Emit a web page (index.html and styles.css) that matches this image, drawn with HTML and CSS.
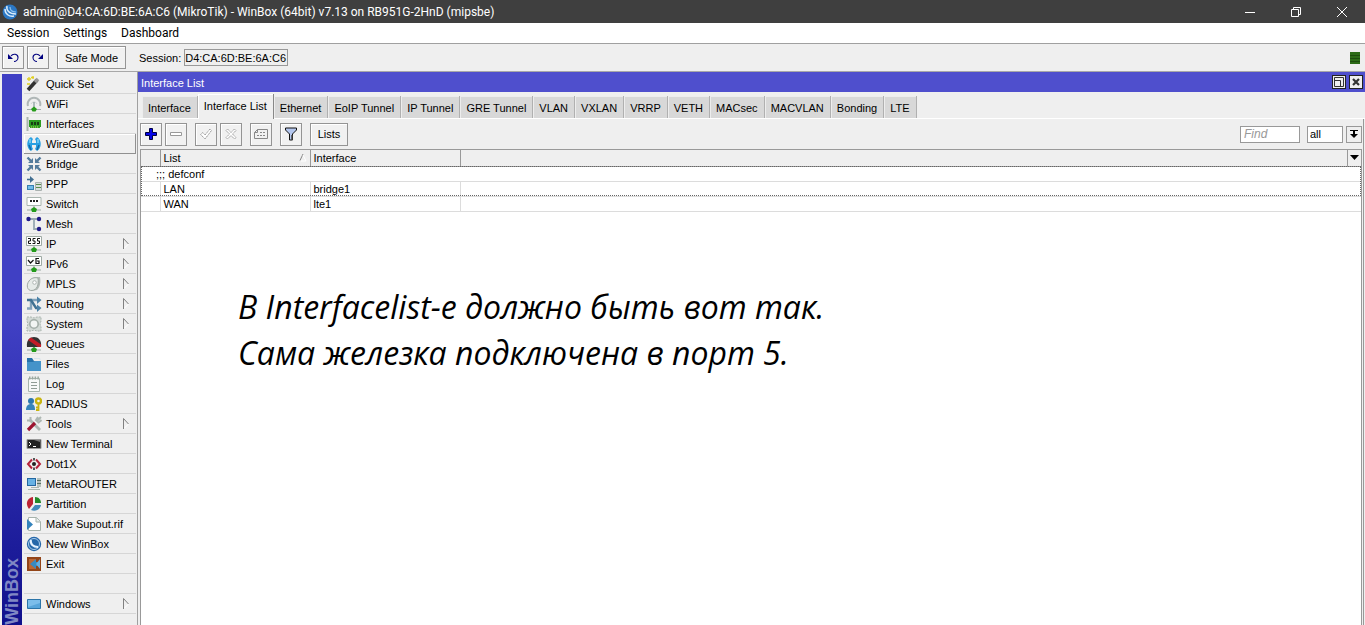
FILE: index.html
```html
<!DOCTYPE html>
<html lang="en">
<head>
<meta charset="utf-8">
<title>WinBox</title>
<link rel="stylesheet" href="styles.css">
</head>
<body>
<div class="app">
  <header class="titlebar">
    <svg class="icon" viewBox="0 0 16 16"><circle cx="8" cy="8" r="7.4" fill="#2b78c5"/><path d="M5 2c-1 4 2 8 9 8M3 5c0 5 4 8 9 7" fill="none" stroke="#d9ecfb" stroke-width="1.5"/><path d="M8 3c0 3 2 5 6 5" fill="none" stroke="#8fc3ee" stroke-width="1.2"/></svg>
    <h1 class="title">admin@D4:CA:6D:BE:6A:C6 (MikroTik) - WinBox (64bit) v7.13 on RB951G-2HnD (mipsbe)</h1>
    <button class="sys" aria-label="Minimize"><svg viewBox="0 0 10 10"><path d="M0 5.500h10" stroke="#fff"/></svg></button>
    <button class="sys" aria-label="Restore"><svg viewBox="0 0 10 10"><path d="M.5 2.500h7v7h-7zM2.500 2.500v-2h7v7h-2" fill="none" stroke="#fff"/></svg></button>
    <button class="sys" aria-label="Close"><svg viewBox="0 0 10 10"><path d="M0 0l10 10M10 0L0 10" stroke="#fff"/></svg></button>
  </header>

  <nav class="menubar">
    <button>Session</button><button>Settings</button><button>Dashboard</button>
  </nav>

  <div class="toolbar">
    <button class="btn" aria-label="Undo"><svg viewBox="0 0 12 12"><path d="M4 4c2-3 7-2 7 1.500C11 8 9 9.500 7 9.500" fill="none" stroke="#00007f" stroke-width="1.100"/><path d="M1 2l5 5H1z" fill="#00007f"/></svg></button>
    <button class="btn" aria-label="Redo"><svg viewBox="0 0 12 12"><path d="M8 4C6 1 1 2 1 5.500 1 8 3 9.500 5 9.500" fill="none" stroke="#00007f" stroke-width="1.100"/><path d="M11 2v5H6z" fill="#00007f"/></svg></button>
    <button class="btn safe">Safe Mode</button>
    <label class="session" for="session">Session:</label>
    <input id="session" class="session-box" value="D4:CA:6D:BE:6A:C6" readonly>
    <svg class="meter" viewBox="0 0 10 12"><path d="M0 0h10v12H0z" fill="#2c6b17"/><path d="M0 3.500h10M0 6.500h10M0 9.500h10" stroke="#1d4d0d"/></svg>
  </div>

  <main class="main">
    <div class="strip"><span>WinBox</span></div>
    <nav class="side">
      <button class="item"><svg class="icon" viewBox="0 0 16 16"><path d="M2 14L11 4" stroke="#333" stroke-width="3.600"/><path d="M9 6l3-3" stroke="#999" stroke-width="3.600"/><path d="M3 1v4M1 3h4M7 0v3M1 8h3M8 1.500H5" stroke="#e0cf20" stroke-width="1.300"/></svg>Quick Set</button>
      <button class="item"><svg class="icon" viewBox="0 0 16 16"><path d="M2 10A6.300 6.300 0 1 1 14 10" fill="none" stroke="#b0b7b7" stroke-width="2"/><path d="M5 8a3.200 3.200 0 0 1 6 0" fill="none" stroke="#d0d5d5"/><path d="M8 6v6" stroke="#9aa" stroke-width="1.500"/><path d="M1 13.500h14" stroke="#a4adad"/><path d="M5 13l3-2.500 3 2.500-1.500 2.500h-3z" fill="#289c1b"/></svg>WiFi</button>
      <button class="item"><svg class="icon" viewBox="0 0 16 16"><path d="M1.500 1v14" stroke="#a9b4ae" stroke-width="2"/><path d="M3 4h12v7h-1v1H4v-1H3z" fill="#2c9b20"/><path d="M5 6h2v3H5zM8 6h2v3H8zM11 6h2v3h-2z" fill="#173e12"/><path d="M5 11h8" stroke="#bedc5a" stroke-dasharray="1 1"/></svg>Interfaces</button>
      <button class="item raised"><svg class="icon" viewBox="0 0 16 16"><path d="M5 1C0 4 0 12 5 15l2-2-1-2V9h4v2l-1 2 2 2c5-3 5-11 0-14L9 3l1 2v2H6V5l1-2z" fill="#2aa0e2"/><path d="M4 3v4M12 3v4" stroke="#80d2f6" stroke-width="1.500"/><path d="M3 9l2 5M13 9l-2 5" stroke="#1368a5" stroke-width="1.500"/></svg>WireGuard</button>
      <button class="item"><svg class="icon" viewBox="0 0 16 16"><path d="M1.500 1.500L5 5M14.500 1.500L11 5M1.500 14.500L5 11M14.500 14.500L11 11" stroke="#537b9c" stroke-width="2.400"/><path d="M7 2v5H2zM9 2v5h5zM7 14V9H2zM9 14V9h5z" fill="#537b9c"/></svg>Bridge</button>
      <button class="item"><svg class="icon" viewBox="0 0 16 16"><path d="M1 3.500h5" stroke="#416e91" stroke-width="1.600"/><path d="M4 0l4 3.500L4 7z" fill="#416e91"/><path d="M1 9h7v5H1z" fill="#377eae"/><path d="M2 10h5v3H2z" fill="#72bce9"/><path d="M9.500 6.500h6v8h-6z" fill="#d9dfdd" stroke="#a9b1af"/><path d="M10 8.500h5M10 11.500h5" stroke="#5a8c4d"/></svg>PPP</button>
      <button class="item"><svg class="icon" viewBox="0 0 16 16"><path d="M1 1.500h14v8H1z" fill="#fff" stroke="#a8b4ae"/><path d="M4 4h2v2H4zM7 4h2v2H7zM10 4h2v2h-2z" fill="#222"/><path d="M8 10v3M1 14h14" stroke="#9baaa3"/><path d="M5 13l3-2 3 2-1 3H6z" fill="#259b1d"/></svg>Switch</button>
      <button class="item"><svg class="icon" viewBox="0 0 16 16"><path d="M3 3h10M8 3v10h5" fill="none" stroke="#98a8b2" stroke-width="1.800"/><g fill="#201a89"><circle cx="2.500" cy="3" r="2.200"/><circle cx="13" cy="3" r="2.200"/><circle cx="13" cy="13" r="2.200"/></g></svg>Mesh</button>
      <button class="item sub"><svg class="icon" viewBox="0 0 16 16"><path d="M.5 .5h15v9H.5z" fill="#fff" stroke="#9eaaa4"/><path d="M2 2.500h2.500v2.500H2.500v2.500H5M9.500 2.500H7V5h2v2.500H6.500M14 2.500h-2.500V5h2v2.500H11" fill="none" stroke="#111"/><path d="M8 10v3M1 14h14" stroke="#9baaa3"/><path d="M5 13l3-2 3 2-1 3H6z" fill="#259b1d"/></svg>IP</button>
      <button class="item sub"><svg class="icon" viewBox="0 0 16 16"><path d="M.5 .5h15v9H.5z" fill="#fff" stroke="#9eaaa4"/><path d="M2 4l2.500 3L7.500 4M13 2.500h-3v5h3V5h-2" fill="none" stroke="#111" stroke-width="1.200"/><path d="M8 10v3M1 14h14" stroke="#9baaa3"/><path d="M5 13l3-2 3 2-1 3H6z" fill="#259b1d"/></svg>IPv6</button>
      <button class="item sub"><svg class="icon" viewBox="0 0 16 16"><path d="M5 3C8 1 11 1 14 1c1 5 0 10-3 13l-6 1z" fill="#b3bbb7"/><path d="M12 2c1 7-1 12-6 12.500S0 9 3 5s7-3.500 9-3z" fill="#e6ebe8" stroke="#9fa8a3"/><circle cx="8.500" cy="6.500" r="1.800" fill="#fff" stroke="#aeb6b2"/></svg>MPLS</button>
      <button class="item sub"><svg class="icon" viewBox="0 0 16 16"><path d="M1 12.500h4V4h7" fill="none" stroke="#83a3bb" stroke-width="2.400"/><path d="M1 4h4l5 8h2" fill="none" stroke="#3f7192" stroke-width="2.400"/><path d="M11 .5L15.500 4 11 8zM11 8.500l4.500 3.500-4.500 4z" fill="#4c82a7"/></svg>Routing</button>
      <button class="item sub"><svg class="icon" viewBox="0 0 16 16"><path d="M1 1h4l3 1 3-1h4v4l-1 3 1 3v4h-4l-3-1-3 1H1v-4l1-3-1-3z" fill="#d3dad6" stroke="#aab5af" stroke-dasharray="2 1"/><circle cx="8" cy="8" r="4.200" fill="#f2f5f3" stroke="#a3aea8" stroke-width="1.600"/></svg>System</button>
      <button class="item"><svg class="icon" viewBox="0 0 16 16"><path d="M1 11C0 4 4 1 8 1s8 3 7 10z" fill="#333"/><path d="M2 4l3-2.500 10 7V11h-3z" fill="#c21d28"/><path d="M8 11v2M1 14h14" stroke="#9baaa3"/><path d="M5 13l3-2 3 2-1 3H6z" fill="#259b1d"/></svg>Queues</button>
      <button class="item"><svg class="icon" viewBox="0 0 16 16"><path d="M1 2h5l2 3h7v10H1z" fill="#2672aa"/><path d="M1 6h6l2-1h6v10H1z" fill="#4493c9"/><path d="M8 2.500h6v2" fill="none" stroke="#d6e4ec"/></svg>Files</button>
      <button class="item"><svg class="icon" viewBox="0 0 16 16"><path d="M2.500 2.500h11v13h-11z" fill="#f7f9f8" stroke="#a7b5ad"/><path d="M3 2h10" stroke="#9aa8a0" stroke-width="3" stroke-dasharray="1.500 1.300"/><path d="M5 6.500h6M5 9.500h6M5 12.500h6" stroke="#8f9c95"/></svg>Log</button>
      <button class="item"><svg class="icon" viewBox="0 0 16 16"><circle cx="5" cy="5" r="3" fill="#2a77af"/><path d="M0 14c0-4 2-6 5-6s4 2 4 6z" fill="#3684bb"/><circle cx="12.500" cy="5" r="2.500" fill="none" stroke="#c7b412" stroke-width="2.400"/><path d="M12.500 8v7M12 11.500h-2M12 14h-2" stroke="#c7b412" stroke-width="1.800"/></svg>RADIUS</button>
      <button class="item sub"><svg class="icon" viewBox="0 0 16 16"><path d="M4 4l10 10" stroke="#adb7b2" stroke-width="2.800"/><path d="M1 4.500h3.500V1M11 5l4-4M15.500 4l-3 2.500L10 4 12 1" fill="none" stroke="#adb7b2" stroke-width="2"/><path d="M2 14l7-7" stroke="#9d1430" stroke-width="3.200"/></svg>Tools</button>
      <button class="item"><svg class="icon" viewBox="0 0 16 16"><path d="M1 3.500h14v9H1z" fill="#222" stroke="#999"/><path d="M8 4h6v2z" fill="#777"/><path d="M3 6l2 2-2 2M7 10.500h3" fill="none" stroke="#fff"/></svg>New Terminal</button>
      <button class="item"><svg class="icon" viewBox="0 0 16 16"><path d="M6 3.500L2 8l4 4.500M10 3.500L14 8l-4 4.500" fill="none" stroke="#b4233b" stroke-width="2"/><circle cx="8" cy="8" r="2" fill="#222"/><path d="M8 2v2.500M8 11.500V14" stroke="#555" stroke-width="2"/></svg>Dot1X</button>
      <button class="item"><svg class="icon" viewBox="0 0 16 16"><path d="M1 2h9v8H1z" fill="#2467a0"/><path d="M2 3h7v6H2z" fill="#67b2e4"/><path d="M11 2h4v9h-4z" fill="#b6c1bc"/><path d="M11 4.500h4M11 7.500h4" stroke="#577064"/><path d="M2 13.500h12M5 11.500h8" stroke="#aab7b0"/></svg>MetaROUTER</button>
      <button class="item"><svg class="icon" viewBox="0 0 16 16"><path d="M7 1v7l-4 5C-1 8 1 2 7 1z" fill="#bd2335"/><path d="M9 1c4 0 6 3 6 6H9z" fill="#228a2a"/><path d="M5 14l4-5h6c-1 5-6 7-10 5z" fill="#418abc"/></svg>Partition</button>
      <button class="item"><svg class="icon" viewBox="0 0 16 16"><path d="M2.500 1.500h8l4 4v9h-12z" fill="#fff" stroke="#a6b2ab"/><path d="M10 1.500V6h4.500" fill="#e6ecea" stroke="#a6b2ab"/><path d="M1 3l6 5.500L1 14z" fill="#3483bc"/></svg>Make Supout.rif</button>
      <button class="item"><svg class="icon" viewBox="0 0 16 16"><circle cx="8" cy="8" r="7.200" fill="#2567a9"/><circle cx="8" cy="8" r="5.500" fill="none" stroke="#a9cceb"/><path d="M5 4c-1 4 2 7 7 7" fill="none" stroke="#e7f3ff" stroke-width="2"/></svg>New WinBox</button>
      <button class="item"><svg class="icon" viewBox="0 0 16 16"><path d="M1 1h14v14H1z" fill="#934519"/><path d="M3 3h7v10H3z" fill="#bd6733"/><path d="M4 8l6-5v3h2v4h-2v3z" fill="#388ac0"/><path d="M10 8l4-5v10z" fill="#65afe0"/></svg>Exit</button>
      <div class="item"></div>
      <button class="item sub"><svg class="icon" viewBox="0 0 16 16"><path d="M1.500 3.500h13v9h-13z" fill="#57a5da" stroke="#2b74a8"/><path d="M2 4h12v3L2 11z" fill="#7bbdea"/></svg>Windows</button>
    </nav>

    <section class="window">
      <header class="wtitle">
        <h2>Interface List</h2>
        <button class="wbtn" aria-label="Restore window"><svg viewBox="0 0 10 10"><path d="M.5 .5h9v9h-9zM1 3.500h5.500v6" fill="none" stroke="#333"/></svg></button>
        <button class="wbtn" aria-label="Close window"><svg viewBox="0 0 10 10"><path d="M2 2l6 6M8 2L2 8" stroke="#333" stroke-width="2.200"/></svg></button>
      </header>
      <div class="tabs">
        <button class="tab">Interface</button><button class="tab active">Interface List</button><button class="tab">Ethernet</button><button class="tab">EoIP Tunnel</button><button class="tab">IP Tunnel</button><button class="tab">GRE Tunnel</button><button class="tab">VLAN</button><button class="tab">VXLAN</button><button class="tab">VRRP</button><button class="tab">VETH</button><button class="tab">MACsec</button><button class="tab">MACVLAN</button><button class="tab">Bonding</button><button class="tab">LTE</button>
      </div>
      <div class="pane">
        <div class="tools">
          <button class="btn" aria-label="Add"><svg viewBox="0 0 12 12"><path d="M4.500 .5h3v4h4v3h-4v4h-3v-4h-4v-3h4z" fill="#0505e8" stroke="#000040"/></svg></button>
          <button class="btn" aria-label="Remove"><svg viewBox="0 0 12 12"><path d="M.5 4.500h11v3H.5z" fill="#fff" stroke="#999"/></svg></button>
          <button class="btn gap" aria-label="Enable"><svg viewBox="0 0 12 12"><path d="M.7 6.500l2-2L5 7l5-6 1.500 1.500L5 11z" fill="#fff" stroke="#999" stroke-dasharray="1.500 .6"/></svg></button>
          <button class="btn" aria-label="Disable"><svg viewBox="0 0 12 12"><path d="M1 2.500L2.500 1 6 4.500 9.500 1 11 2.500 7.500 6 11 9.500 9.500 11 6 7.500 2.500 11 1 9.500 4.500 6z" fill="#fff" stroke="#999" stroke-dasharray="1.500 .6"/></svg></button>
          <button class="btn gap" aria-label="Comment"><svg class="wide" viewBox="0 0 14 12"><path d="M3.500 1.500h10v9H.5v-6zM3.500 1.500v3h-3" fill="none" stroke="#888"/><path d="M6 4.500h6M3 7.500h8" stroke="#888" stroke-dasharray="2 1"/></svg></button>
          <button class="btn gap" aria-label="Filter"><svg viewBox="0 0 12 14" class="funnel"><path d="M.5 1h11v2l-4 4v6h-3V7l-4-4z" fill="#b4c7ef" stroke="#111"/><path d="M7 8v5" stroke="#444" stroke-width="1.500"/></svg></button>
          <button class="btn gap lists">Lists</button>
          <input class="find" placeholder="Find" aria-label="Find">
          <select class="scope" aria-label="List filter"><option>all</option></select>
          <button class="drop" aria-label="More filters"><svg viewBox="0 0 8 8"><path d="M0 .5h8" stroke="#000"/><path d="M3 1h2v3h3L4 8 0 4h3z"/></svg></button>
        </div>
        <div class="grid">
          <table>
            <colgroup><col class="c-flag"><col class="c-col"><col class="c-col"><col><col class="c-menu"></colgroup>
            <thead>
              <tr><th></th><th><div class="sort">List<svg viewBox="0 0 8 8"><path d="M1 6.500L4 0" stroke="#888"/><path d="M4 1l3 6H2" fill="none" stroke="#fff"/></svg></div></th><th>Interface</th><th></th><th class="menu"><button aria-label="Columns"><svg viewBox="0 0 9 5"><path d="M0 0h9L4.500 5z"/></svg></button></th></tr>
            </thead>
            <tbody class="selected">
              <tr class="comment"><td colspan="5">;;; defconf</td></tr>
              <tr><td></td><td>LAN</td><td>bridge1</td><td colspan="2"></td></tr>
            </tbody>
            <tbody>
              <tr><td></td><td>WAN</td><td>lte1</td><td colspan="2"></td></tr>
            </tbody>
          </table>
          <p class="note">В Interfacelist-е должно быть вот так.<br>Сама железка подключена в порт 5.</p>
        </div>
      </div>
    </section>
  </main>
</div>
</body>
</html>
```

FILE: styles.css
```css
* { box-sizing: border-box; }
html, body { height: 100%; margin: 0; }
body { font: 11px/14px "Liberation Sans", Arial, sans-serif; color: #000; background: #efefef; overflow: hidden; }
button, input, select { font: inherit; color: inherit; margin: 0; padding: 0; border: 0; border-radius: 0; background: none; }
button { display: flex; align-items: center; justify-content: center; white-space: nowrap; }
h1, h2, p { margin: 0; font-weight: normal; }
svg { display: block; flex: none; }
.app { display: flex; flex-direction: column; height: 100vh; }
.icon { width: 16px; height: 16px; }

.titlebar { display: flex; align-items: center; height: 23px; flex: none; padding-left: 2px; background: #3f3f3f; color: #fff; }
.title { flex: 1; padding-left: 5px; font: 12px/22px Roboto, "Open Sans", sans-serif; white-space: nowrap; }
.sys { width: 46px; height: 22px; }
.sys svg { width: 10px; height: 10px; }

.menubar { display: flex; gap: 14px; height: 21px; flex: none; padding: 0 7px; background: #fff; border-bottom: 1px solid #a0a0a0; font: 12px/20px Roboto, "Open Sans", sans-serif; }

.toolbar { display: flex; align-items: center; height: 28px; flex: none; padding: 0 5px 0 2px; gap: 3px; border-bottom: 1px solid #a8a8a8; }
.btn { width: 22px; height: 23px; border: 1px solid #949494; background: #f1f1f1; box-shadow: inset 1px 1px #fff; }
.btn svg { width: 12px; height: 12px; }
.btn .wide { width: 14px; }
.btn .funnel { height: 14px; }
.toolbar .safe { width: 69px; margin-left: 5px; }
.session { margin-left: 10px; }
.session-box { width: 104px; height: 17px; border: 1px solid #999; }
.meter { width: 10px; height: 12px; margin-left: auto; }

.main { display: flex; flex: 1; min-height: 0; }
.strip { display: flex; align-items: flex-end; justify-content: center; width: 20px; margin: 2px 0 0 2px; background: linear-gradient(#4040c4 45%, #10108c); overflow: hidden; }
.strip span { writing-mode: vertical-rl; transform: rotate(180deg); font: bold 18px/20px "Liberation Sans", Arial, sans-serif; color: #8088c4; }
.side { width: 114px; padding: 2px 0 0 2px; overflow: hidden; }
.item { display: flex; justify-content: flex-start; align-items: center; gap: 4px; width: 100%; height: 20px; padding-left: 2px; border-bottom: 1px solid #d6d6d6; }
.raised { border-right: 1px solid #909090; border-bottom-color: #909090; box-shadow: inset 1px 1px #fff; }
.sub::after { content: ""; width: 6px; height: 11px; margin: 0 7px 0 auto; background: url('data:image/svg+xml,<svg xmlns="http://www.w3.org/2000/svg" viewBox="0 0 6 11"><path d="M1 10.500L5.500 6" stroke="white"/><path d="M.5 11V.5L5.500 6" fill="none" stroke="gray"/></svg>'); }

.window { display: flex; flex-direction: column; flex: 1; min-width: 0; margin-left: 1px; border-left: 1px solid #a0a0a0; }
.wtitle { display: flex; align-items: center; gap: 3px; height: 20px; flex: none; padding: 0 2px 0 3px; background: #4f4fcd; color: #fff; }
.wtitle h2 { flex: 1; padding-top: 1px; font-size: 11px; }
.wbtn { width: 14px; height: 14px; background: #efefef; border: 1px solid #222; }
.wbtn svg { width: 10px; height: 10px; }

.tabs { display: flex; align-items: flex-end; height: 27px; flex: none; padding-left: 4px; border-bottom: 1px solid #fff; }
.tab { height: 22px; padding: 1px 6px 0; background: #d8d8d8; border-right: 1px solid #b0b0b0; box-shadow: inset 1px 1px #ededed; }
.tab.active { height: 25px; padding: 0 6px 2px; margin-bottom: -1px; background: #efefef; border-right-color: #888; box-shadow: inset 1px 1px #fff; }

.pane { display: flex; flex-direction: column; flex: 1; min-height: 0; margin-right: 1px; padding: 3px 1px 0; border-right: 1px solid #999; }
.tools { display: flex; align-items: center; height: 24px; gap: 3px; padding: 0 0 0 1px; }
.tools .gap { margin-left: 5px; }
.tools .lists { width: 38px; }
.find { width: 60px; height: 17px; margin-left: auto; padding: 0 3px; background: #fff; border: 1px solid #999; font-size: 12px; font-style: italic; }
.find::placeholder { color: #999; }
.scope { appearance: none; width: 36px; height: 17px; margin-left: 4px; padding: 0 2px; background: #fff; border: 1px solid #999; }
.drop { width: 16px; height: 17px; border: 1px solid #999; }
.drop svg { width: 8px; height: 8px; }

.grid { flex: 1; margin: 3px 0 0 1px; background: #fff; border: 1px solid #999; border-bottom: 0; }
table { width: 100%; table-layout: fixed; border-collapse: collapse; }
.c-flag { width: 19px; }
.c-col { width: 150px; }
.c-menu { width: 14px; }
th, td { height: 15px; padding: 0 3px; line-height: 14px; text-align: left; font-weight: normal; }
th { height: 16px; padding-top: 1px; background: #efefef; border-right: 1px solid #999; border-bottom: 1px solid #999; }
th:last-child { border-right: 0; }
td { border-bottom: 1px solid #dcdcdc; border-right: 1px solid #dcdcdc; }
td:last-child { border-right: 0; }
.comment td { padding-left: 15px; }
.selected { outline: 1px dotted #666; outline-offset: -1px; }
.sort { display: flex; justify-content: space-between; align-items: center; }
.sort svg { width: 8px; height: 8px; }
.menu { padding: 0; }
.menu button { width: 100%; }
.menu svg { width: 9px; height: 5px; }
.note { padding: 72px 0 0 97px; font: italic 500 32px/46px "Open Sans", "Noto Sans", sans-serif; white-space: nowrap; }
```
